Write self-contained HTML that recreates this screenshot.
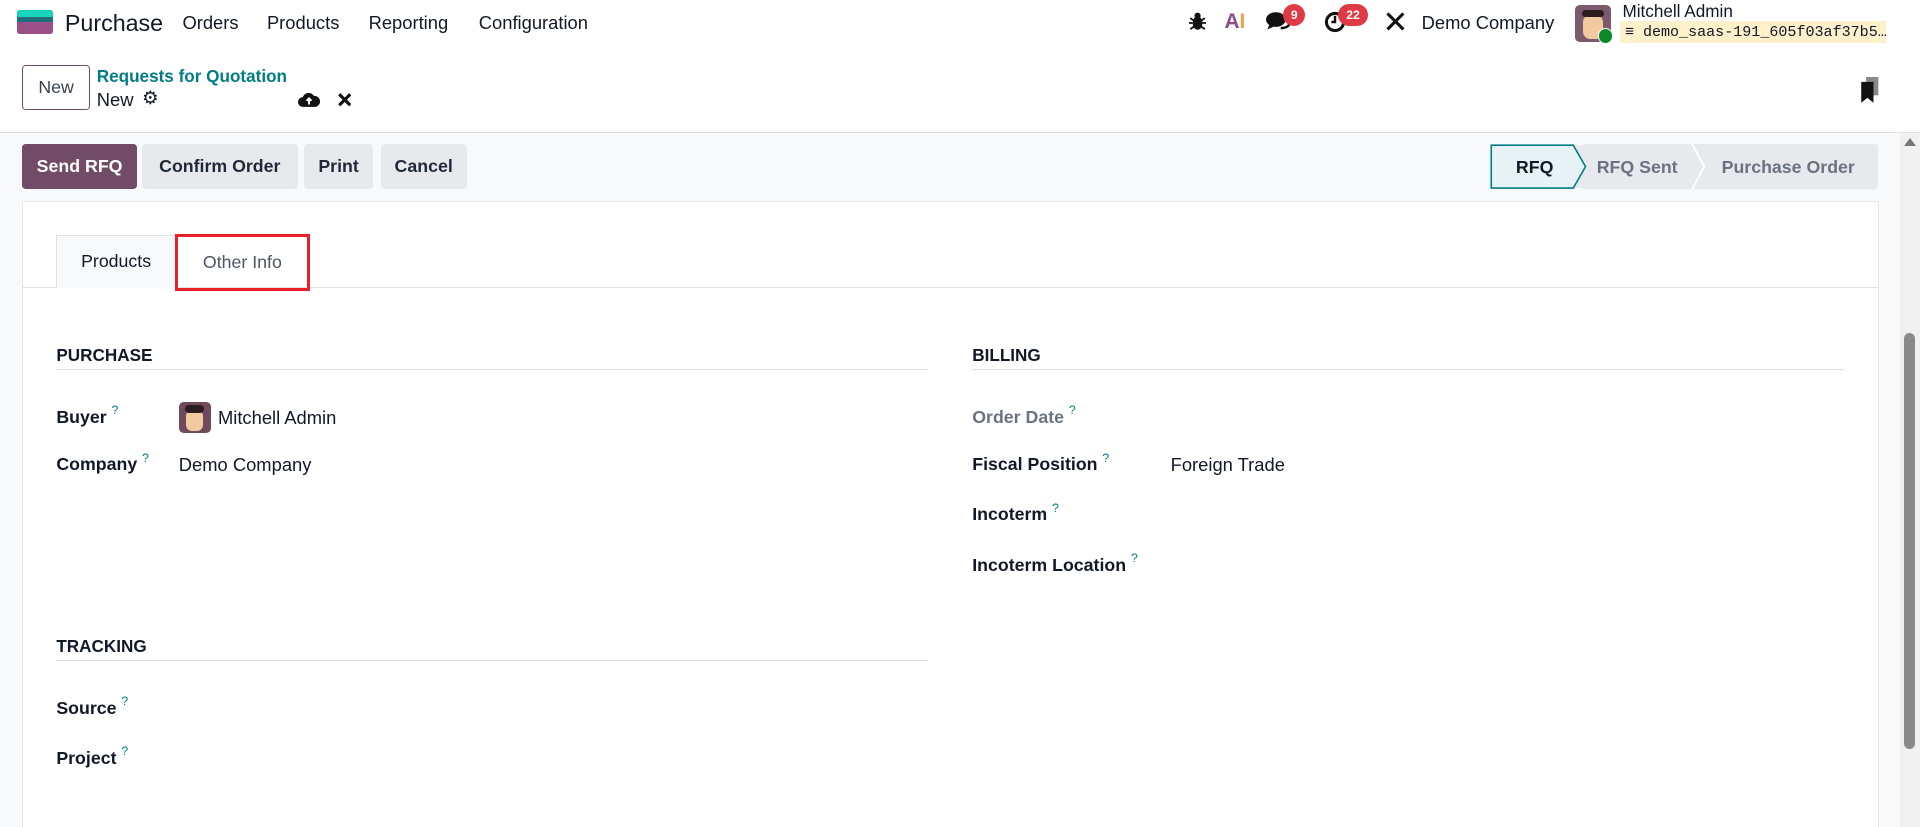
<!DOCTYPE html>
<html><head><meta charset="utf-8"><style>
html,body{margin:0;padding:0;width:1920px;height:827px;overflow:hidden;background:#fff;}
#z{zoom:1.22449;width:1568px;height:675px;position:relative;font-family:"Liberation Sans",sans-serif;color:#111827;font-size:14px;}
.a{position:absolute;white-space:nowrap;}
.btn{position:absolute;top:118px;height:36px;line-height:36px;text-align:center;font-weight:bold;font-size:14.5px;border-radius:3px;background:#e7e9ed;color:#1f2937;}
.lbl{position:absolute;font-weight:bold;font-size:14.5px;}
.q{color:#017e84;font-size:10px;font-weight:normal;vertical-align:top;margin-left:4px;position:relative;top:-3px;}
.hd{position:absolute;font-weight:bold;font-size:14px;}
.ln{position:absolute;height:1px;background:#dee2e6;}
.badge{position:absolute;background:#e03a45;color:#fff;font-size:10px;font-weight:bold;border-radius:9px;height:18px;line-height:18px;text-align:center;}
</style></head><body><div id="z">
<div class="a" style="left:14px;top:8px;width:29px;height:6px;background:#1ad3bb;border-radius:2px 2px 0 0"></div>
<div class="a" style="left:14px;top:14px;width:29px;height:4px;background:#1f6f7a"></div>
<div class="a" style="left:14px;top:18px;width:29px;height:10px;background:#9b5089;border-radius:0 0 2px 2px"></div>
<div class="a" style="left:53px;top:8px;font-size:19px;">Purchase</div>
<div class="a" style="left:149px;top:10px;font-size:15px;">Orders</div>
<div class="a" style="left:218px;top:10px;font-size:15px;">Products</div>
<div class="a" style="left:301px;top:10px;font-size:15px;">Reporting</div>
<div class="a" style="left:391px;top:10px;font-size:15px;">Configuration</div>
<svg class="a" style="left:971px;top:10px" width="14" height="16" viewBox="0 0 14 16"><ellipse cx="7" cy="9" rx="4" ry="5.5" fill="#111"/><circle cx="7" cy="3" r="2.5" fill="#111"/><path d="M1 5l3 2M13 5l-3 2M0 9h3M14 9h-3M1 14l3-2M13 14l-3-2" stroke="#111" stroke-width="1.5"/></svg>
<div class="a" style="left:1000px;top:8px;font-size:17px;font-weight:bold;color:#8e4b86;">A<span style="color:#f0a24a">I</span></div>
<svg class="a" style="left:1034px;top:9px" width="20" height="18" viewBox="0 0 20 18"><ellipse cx="8" cy="7" rx="8" ry="6" fill="#111"/><path d="M3 11l-2 4 5-2z" fill="#111"/><path d="M12 14c3 0 6-1 7-3" stroke="#111" stroke-width="2" fill="none"/></svg>
<div class="badge" style="left:1048px;top:3px;width:18px;">9</div>
<svg class="a" style="left:1081px;top:9px" width="18" height="18" viewBox="0 0 18 18"><circle cx="9" cy="9" r="7" stroke="#111" stroke-width="2.5" fill="none"/><path d="M9 4v5h-3" stroke="#111" stroke-width="2" fill="none"/></svg>
<div class="badge" style="left:1093px;top:3px;width:24px;">22</div>
<svg class="a" style="left:1131px;top:9px" width="17" height="17" viewBox="0 0 17 17"><path d="M2 2l13 13M15 2L2 15" stroke="#111" stroke-width="2.5"/></svg>
<div class="a" style="left:1161px;top:10px;font-size:15px;">Demo Company</div>
<div class="a" style="left:1286px;top:4px;width:30px;height:30px;background:#7a5a6c;border-radius:4px;overflow:hidden"><div style="position:absolute;left:7px;top:8px;width:16px;height:20px;background:#f3c9a0;border-radius:6px"></div><div style="position:absolute;left:6px;top:4px;width:18px;height:6px;background:#2b1d1d;border-radius:4px"></div></div>
<div class="a" style="left:1305px;top:23px;width:11px;height:11px;background:#0b8a28;border-radius:50%;border:1px solid #fff"></div>
<div class="a" style="left:1325px;top:1px;font-size:14px;">Mitchell Admin</div>
<div class="a" style="left:1323px;top:17px;width:217px;height:18px;background:#fdf1cc;"></div>
<div class="a" style="left:1327px;top:19px;font-size:12.3px;font-family:'Liberation Mono',monospace;">≡ demo_saas-191_605f03af37b5…</div>
<div class="a" style="left:18px;top:53px;width:54px;height:35px;border:1px solid #714b67;border-radius:3px;text-align:center;line-height:35px;font-size:14.5px;color:#374151">New</div>
<div class="a" style="left:79px;top:54px;font-size:14px;color:#017e84;font-weight:bold;">Requests for Quotation</div>
<div class="a" style="left:79px;top:73px;font-size:15px;">New</div>
<div class="a" style="left:116px;top:71px;font-size:15px;">⚙</div>
<svg class="a" style="left:243px;top:74px" width="18" height="14" viewBox="0 0 18 14"><path d="M4 13a4 4 0 010-8 5 5 0 019-1 4 4 0 011 9z" fill="#111"/><path d="M9 11V6M7 8l2-2 2 2" stroke="#fff" stroke-width="1.5" fill="none"/></svg>
<svg class="a" style="left:276px;top:76px" width="11" height="11"><path d="M1 1l9 9M10 1l-9 9" stroke="#111" stroke-width="2.6"/></svg>
<svg class="a" style="left:1519px;top:63px" width="16" height="22"><rect x="5" y="0" width="10" height="15" fill="#888"/><path d="M1 4h10v17l-5-4-5 4z" fill="#111"/></svg>
<div class="a" style="left:0;top:108px;width:1568px;height:567px;background:#f8f9fa;border-top:1px solid #dcdfe3"></div>
<div class="btn" style="left:18px;width:94px;background:#714b67;color:#fff;">Send RFQ</div>
<div class="btn" style="left:116px;width:127px;">Confirm Order</div>
<div class="btn" style="left:248px;width:57px;">Print</div>
<div class="btn" style="left:311px;width:70px;">Cancel</div>
<svg class="a" style="left:1217px;top:118px" width="318" height="37" viewBox="0 0 318 37"><path d="M1 1h161l0 0 0 35H1z" fill="#e7e9ed"/><rect x="75" y="0" width="242" height="37" rx="3" fill="#e7e9ed"/><path d="M1 1h67l10 17.5L68 36H1z" fill="#e6f2f3" stroke="#017e84" stroke-width="1.3"/><path d="M165 0l10 18.5L165 37" stroke="#fff" stroke-width="1.5" fill="none"/></svg>
<div class="a" style="left:1238px;top:128px;font-weight:bold;font-size:14.5px;">RFQ</div>
<div class="a" style="left:1304px;top:128px;font-weight:bold;font-size:14.5px;color:#6b7280">RFQ Sent</div>
<div class="a" style="left:1406px;top:128px;font-weight:bold;font-size:14.5px;color:#6b7280">Purchase Order</div>
<div class="a" style="left:18px;top:164px;width:1515px;height:520px;background:#fff;border:1px solid #e5e7eb;"></div>
<div class="ln" style="left:19px;top:234px;width:1515px;"></div>
<div class="a" style="left:46px;top:192px;width:96px;height:42px;background:#f8f9fa;border:1px solid #dee2e6;border-bottom:none;line-height:42px;text-align:center;font-size:14.5px;">Products</div>
<div class="a" style="left:143px;top:191px;width:105px;height:42px;border:3px solid #e8202a;line-height:42px;text-align:center;font-size:14.5px;color:#4b5563;">Other Info</div>
<div class="hd" style="left:46px;top:282px;">PURCHASE</div><div class="ln" style="left:46px;top:301px;width:712px;"></div>
<div class="hd" style="left:794px;top:282px;">BILLING</div><div class="ln" style="left:794px;top:301px;width:712px;"></div>
<div class="lbl" style="left:46px;top:332px;">Buyer<span class="q">?</span></div>
<div class="a" style="left:146px;top:328px;width:26px;height:26px;background:#6e4a5c;border-radius:4px;overflow:hidden"><div style="position:absolute;left:6px;top:7px;width:14px;height:17px;background:#f3c9a0;border-radius:5px"></div><div style="position:absolute;left:5px;top:3px;width:16px;height:6px;background:#2b1d1d;border-radius:4px"></div></div>
<div class="a" style="left:178px;top:332px;font-size:15px;">Mitchell Admin</div>
<div class="lbl" style="left:46px;top:371px;">Company<span class="q">?</span></div>
<div class="a" style="left:146px;top:371px;font-size:15px;">Demo Company</div>
<div class="lbl" style="left:794px;top:332px;color:#6b7280">Order Date<span class="q">?</span></div>
<div class="lbl" style="left:794px;top:371px;">Fiscal Position<span class="q">?</span></div>
<div class="a" style="left:956px;top:371px;font-size:15px;">Foreign Trade</div>
<div class="lbl" style="left:794px;top:412px;">Incoterm<span class="q">?</span></div>
<div class="lbl" style="left:794px;top:453px;">Incoterm Location<span class="q">?</span></div>
<div class="hd" style="left:46px;top:519px;">TRACKING</div><div class="ln" style="left:46px;top:539px;width:712px;"></div>
<div class="lbl" style="left:46px;top:570px;">Source<span class="q">?</span></div>
<div class="lbl" style="left:46px;top:611px;">Project<span class="q">?</span></div>
<div class="a" style="left:1552px;top:109px;width:16px;height:566px;background:#f1f1f1"></div>
<div class="a" style="left:1555px;top:113px;width:0;height:0;border-left:5px solid transparent;border-right:5px solid transparent;border-bottom:7px solid #777"></div>
<div class="a" style="left:1555px;top:272px;width:9px;height:340px;background:#8a8a8a;border-radius:5px"></div>
</div></body></html>
